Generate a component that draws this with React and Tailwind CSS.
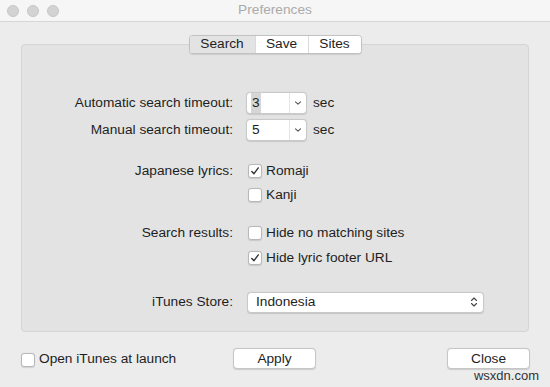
import { useState } from 'react'

function Check({ checked, onChange }) {
  return (
    <button
      type="button"
      onClick={onChange}
      className="w-[14px] h-[14px] shrink-0 rounded-[3px] border border-[#b8b8b8] bg-white shadow-[0_0.5px_1px_rgba(0,0,0,0.12)] flex items-center justify-center"
    >
      {checked && (
        <svg width="10" height="10" viewBox="0 0 10 10">
          <path d="M1.8 5.4 L4 7.7 L8.3 1.9" fill="none" stroke="#333" strokeWidth="1.4" strokeLinecap="round" strokeLinejoin="round" />
        </svg>
      )}
    </button>
  )
}

function Combo({ value, selected }) {
  return (
    <div className="w-[61px] h-[22px] flex bg-white rounded-[4px] border border-[#c9c9c9] shadow-[0_0.5px_1px_rgba(0,0,0,0.12)]">
      <div className="flex-1 flex items-center pl-[4px]">
        <span className={selected ? 'bg-[#d6d6d6] px-[1px]' : 'px-[1px]'}>{value}</span>
      </div>
      <div className="w-[17px] border-l border-[#e4e4e4] flex items-center justify-center">
        <svg width="8" height="6" viewBox="0 0 8 6">
          <path d="M1.5 1.8 L4 4.2 L6.5 1.8" fill="none" stroke="#555" strokeWidth="1.1" strokeLinecap="round" strokeLinejoin="round" />
        </svg>
      </div>
    </div>
  )
}

function Row({ label, children, className = '' }) {
  return (
    <div className={`grid grid-cols-[211px_1fr] gap-x-[13px] items-center h-[22px] ${className}`}>
      <div className="text-right">{label}</div>
      <div className="flex items-center gap-[6px]">{children}</div>
    </div>
  )
}

export default function App() {
  const [tab, setTab] = useState('Search')
  const [opts, setOpts] = useState({ romaji: true, kanji: false, hideNoMatch: false, hideFooter: true, openAtLaunch: false })
  const toggle = k => setOpts(o => ({ ...o, [k]: !o[k] }))

  return (
    <div className="w-[550px] h-[387px] bg-[#ececec] overflow-hidden text-[13.7px] text-[#1e1e1e] font-['Liberation_Sans',Arial,sans-serif] relative">
      {/* title bar */}
      <div className="h-[22px] bg-[#f6f6f6] border-b border-[#d6d6d6] grid grid-cols-[1fr_auto_1fr] items-center">
        <div className="flex items-center gap-[8px] pl-[7px]">
          <span className="w-[12px] h-[12px] rounded-full bg-[#d3d3d3] border border-[#c6c6c6]" />
          <span className="w-[12px] h-[12px] rounded-full bg-[#d3d3d3] border border-[#c6c6c6]" />
          <span className="w-[12px] h-[12px] rounded-full bg-[#d3d3d3] border border-[#c6c6c6]" />
        </div>
        <div className="text-[#ababab]">Preferences</div>
        <div />
      </div>

      <div className="px-[21px] pt-[22px]">
        <div className="relative h-[288px] bg-[#e3e3e3] border border-[#d5d5d5] rounded-[4px]">
          <div className="absolute left-0 right-0 -top-[10px] flex justify-center">
            <div className="flex h-[19px] rounded-[4px] border border-[#c2c2c2] bg-white shadow-[0_0.5px_1px_rgba(0,0,0,0.1)] overflow-hidden">
              {['Search', 'Save', 'Sites'].map((t, i) => (
                <button
                  key={t}
                  onClick={() => setTab(t)}
                  className={`h-full flex items-center justify-center ${i === 0 ? 'w-[65px]' : 'w-[53px] border-l border-[#dadada]'} ${tab === t ? 'bg-[#e3e3e3]' : 'bg-white'}`}
                >
                  {t}
                </button>
              ))}
            </div>
          </div>

          <div className="pt-[47px] flex flex-col">
            <Row label="Automatic search timeout:">
              <Combo value="3" selected />
              <span>sec</span>
            </Row>
            <Row label="Manual search timeout:" className="mt-[5px]">
              <Combo value="5" />
              <span>sec</span>
            </Row>

            <Row label="Japanese lyrics:" className="mt-[19px]">
              <span className="pl-[2px] flex items-center gap-[4px]"><Check checked={opts.romaji} onChange={() => toggle('romaji')} />Romaji</span>
            </Row>
            <Row label="" className="mt-[2px]">
              <span className="pl-[2px] flex items-center gap-[4px]"><Check checked={opts.kanji} onChange={() => toggle('kanji')} />Kanji</span>
            </Row>

            <Row label="Search results:" className="mt-[16px]">
              <span className="pl-[2px] flex items-center gap-[4px]"><Check checked={opts.hideNoMatch} onChange={() => toggle('hideNoMatch')} />Hide no matching sites</span>
            </Row>
            <Row label="" className="mt-[3px]">
              <span className="pl-[2px] flex items-center gap-[4px]"><Check checked={opts.hideFooter} onChange={() => toggle('hideFooter')} />Hide lyric footer URL</span>
            </Row>

            <Row label="iTunes Store:" className="mt-[22px]">
              <div className="ml-[1px] w-[237px] h-[21px] bg-white rounded-[4px] border border-[#c9c9c9] shadow-[0_0.5px_1px_rgba(0,0,0,0.14)] flex items-center justify-between pl-[8px] pr-[5px]">
                <span>Indonesia</span>
                <svg width="8" height="12" viewBox="0 0 8 12">
                  <path d="M1.5 4.5 L4 2 L6.5 4.5 M1.5 7.5 L4 10 L6.5 7.5" fill="none" stroke="#444" strokeWidth="1.1" strokeLinecap="round" strokeLinejoin="round" />
                </svg>
              </div>
            </Row>
          </div>
        </div>

        <div className="mt-[16px] h-[21px] flex items-center">
          <span className="w-[212px] pt-[2px] flex items-center gap-[4px]">
            <Check checked={opts.openAtLaunch} onChange={() => toggle('openAtLaunch')} />
            Open iTunes at launch
          </span>
          <button className="w-[83px] h-[21px] bg-white rounded-[4px] border border-[#c6c6c6] shadow-[0_0.5px_1px_rgba(0,0,0,0.14)]">Apply</button>
          <button className="ml-auto mr-[-1px] w-[83px] h-[21px] bg-white rounded-[4px] border border-[#c6c6c6] shadow-[0_0.5px_1px_rgba(0,0,0,0.14)]">Close</button>
        </div>
        <div className="text-right mr-[-10px] text-[13px] text-[#333] leading-[16px] -mt-[1px]">wsxdn.com</div>
      </div>
    </div>
  )
}
